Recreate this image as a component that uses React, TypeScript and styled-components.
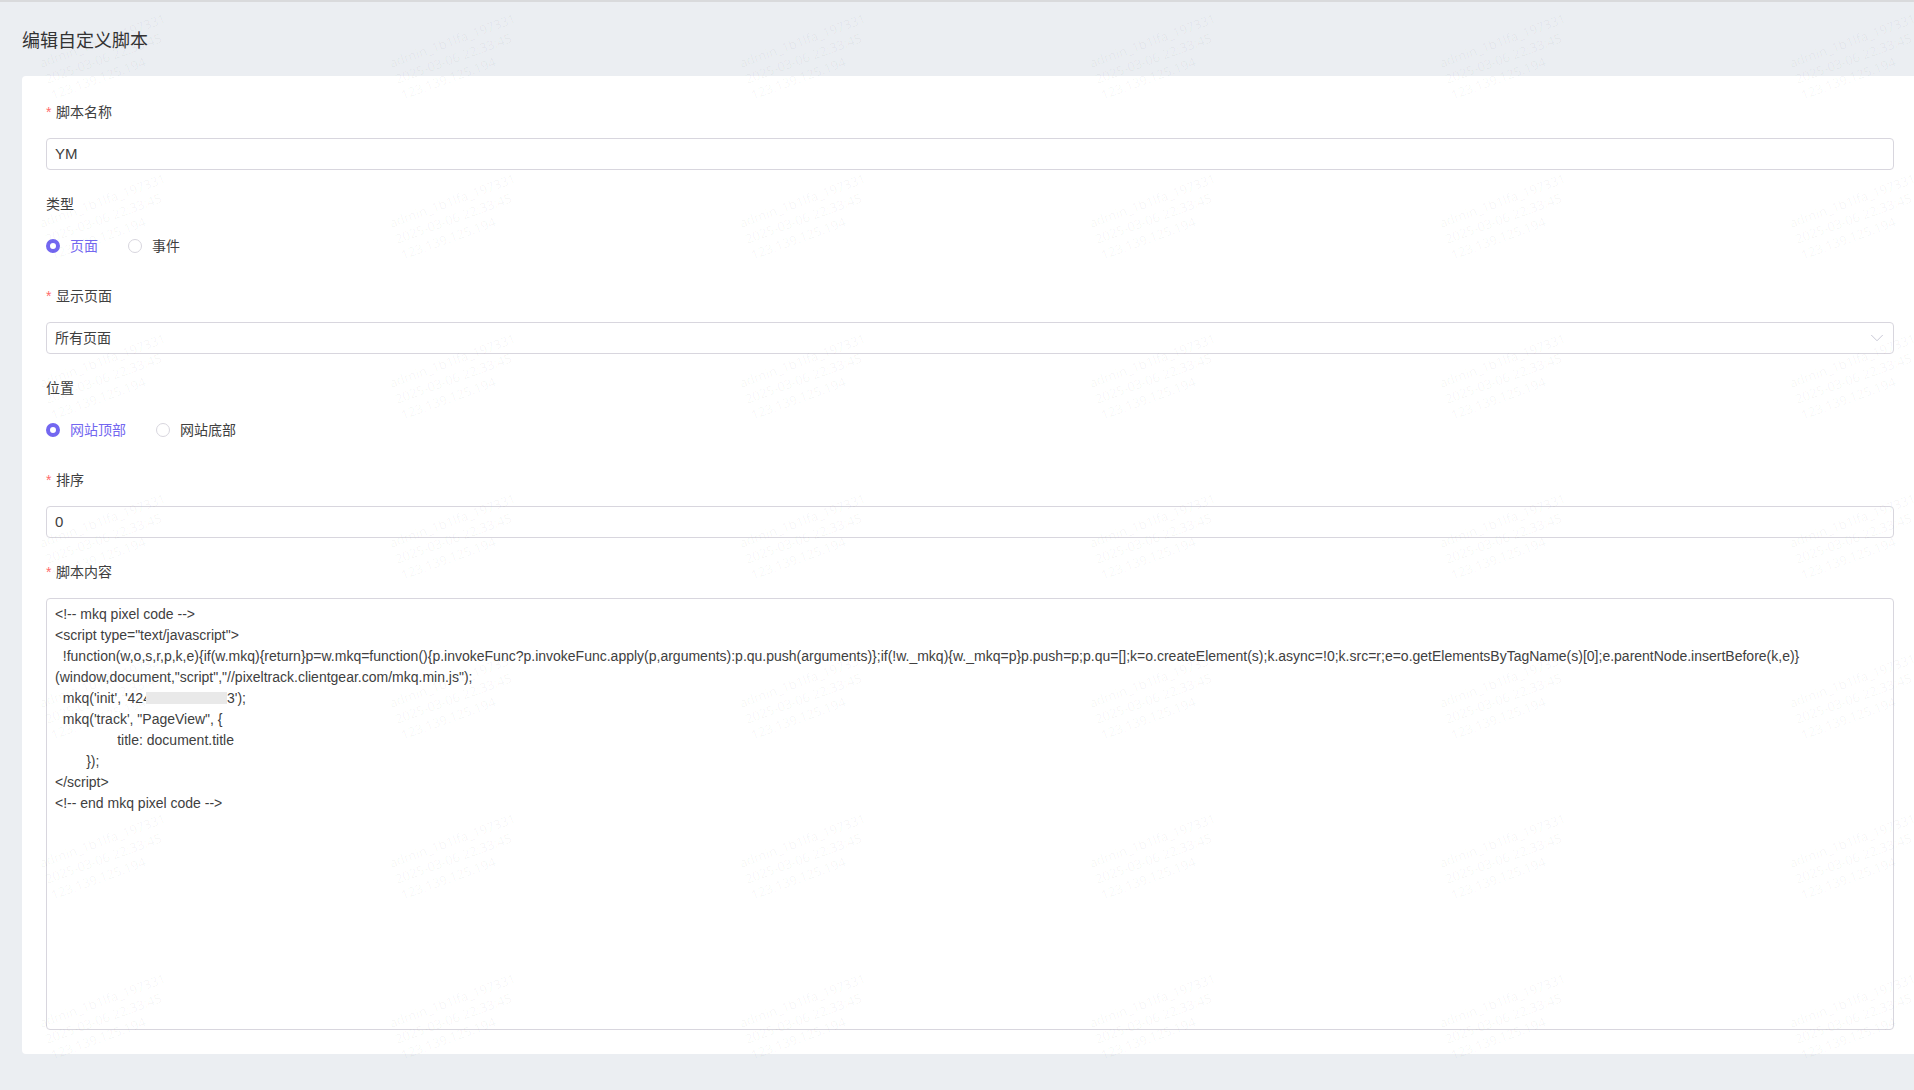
import React from "react";
import styled, { createGlobalStyle } from "styled-components";
import { ChevronDown } from "lucide-react";

const FONT = `"Liberation Sans", "Noto Sans CJK SC", sans-serif`;

const WATERMARK_COLS = 6;
const WATERMARK_ROWS = 7;

export default function App() {
  return (
    <Page>
      <GlobalStyle />
      <Title>编辑自定义脚本</Title>
      <Card>
        <Item>
          <Label $required>脚本名称</Label>
          <TextField>YM</TextField>
        </Item>
        <Item>
          <Label>类型</Label>
          <RadioGroup>
            <Radio $checked>页面</Radio>
            <Radio>事件</Radio>
          </RadioGroup>
        </Item>
        <Item>
          <Label $required>显示页面</Label>
          <SelectField>
            所有页面
            <SelectArrow>
              <ChevronDown size={22} strokeWidth={1} />
            </SelectArrow>
          </SelectField>
        </Item>
        <Item>
          <Label>位置</Label>
          <RadioGroup>
            <Radio $checked>网站顶部</Radio>
            <Radio>网站底部</Radio>
          </RadioGroup>
        </Item>
        <Item>
          <Label $required>排序</Label>
          <TextField>0</TextField>
        </Item>
        <Item>
          <Label $required>脚本内容</Label>
          <CodeArea>
            {`<!-- mkq pixel code -->
<script type="text/javascript">
  !function(w,o,s,r,p,k,e){if(w.mkq){return}p=w.mkq=function(){p.invokeFunc?p.invokeFunc.apply(p,arguments):p.qu.push(arguments)};if(!w._mkq){w._mkq=p}p.push=p;p.qu=[];k=o.createElement(s);k.async=!0;k.src=r;e=o.getElementsByTagName(s)[0];e.parentNode.insertBefore(k,e)}
(window,document,"script","//pixeltrack.clientgear.com/mkq.min.js");
  mkq('init', '424`}
            <Redacted />
            {`3');
  mkq('track', "PageView", {
                title: document.title
        });
</script>
<!-- end mkq pixel code -->`}
          </CodeArea>
        </Item>
      </Card>
      <WatermarkLayer>
        {Array.from({ length: WATERMARK_COLS * WATERMARK_ROWS }).map((_, i) => (
          <WatermarkCell key={i}>
            <WatermarkText>
              admin_1b1lfa_197331
              <br />
              2025-03-06 22:33:45
              <br />
              123.139.125.194
            </WatermarkText>
          </WatermarkCell>
        ))}
      </WatermarkLayer>
    </Page>
  );
}

const GlobalStyle = createGlobalStyle`
  html, body {
    margin: 0;
    padding: 0;
    background: #ebeef2;
  }
  *, *::before, *::after {
    box-sizing: border-box;
  }
`;

const Page = styled.div`
  position: relative;
  width: 1914px;
  height: 1090px;
  overflow: hidden;
  padding: 26px 0 36px 22px;
  background: #ebeef2;
  border-top: 2px solid #d9dadc;
  font-family: ${FONT};
  color: #333;
`;

const Title = styled.h1`
  margin: 0 0 22px;
  height: 26px;
  font-size: 18px;
  line-height: 26px;
  font-weight: 400;
  color: #333;
`;

const Card = styled.div`
  height: 978px;
  padding: 25px 20px 0 24px;
  background: #fff;
  border-radius: 4px 0 0 4px;
`;

const Item = styled.div`
  margin-bottom: 23px;
`;

const Label = styled.div<{ $required?: boolean }>`
  height: 22px;
  margin-bottom: 15px;
  font-size: 14px;
  line-height: 22px;
  color: #404040;

  ${({ $required }) =>
    $required &&
    `
    &::before {
      content: "*";
      display: inline-block;
      width: 10px;
      color: #ff6b6b;
      font-size: 14px;
    }
  `}
`;

const TextField = styled.div`
  height: 32px;
  padding: 0 8px;
  border: 1px solid #d8d6de;
  border-radius: 4px;
  background: #fff;
  font-size: 15px;
  line-height: 30px;
  color: #404040;
`;

const SelectField = styled(TextField)`
  position: relative;
  font-size: 14px;
`;

const SelectArrow = styled.span`
  position: absolute;
  top: 4px;
  right: 5px;
  display: flex;
  color: #c4c3d2;
`;

const RadioGroup = styled.div`
  display: flex;
  align-items: center;
  gap: 30px;
  height: 32px;
`;

const Radio = styled.span<{ $checked?: boolean }>`
  display: inline-flex;
  align-items: center;
  gap: 10px;
  font-size: 14px;
  line-height: 22px;
  color: ${({ $checked }) => ($checked ? "#7367f0" : "#404040")};

  &::before {
    content: "";
    width: 14px;
    height: 14px;
    border-radius: 50%;
    background: #fff;
    border: ${({ $checked }) =>
      $checked ? "4.5px solid #7367f0" : "1px solid #d8d6de"};
  }
`;

const CodeArea = styled.div`
  height: 432px;
  padding: 5px 8px;
  border: 1px solid #d8d6de;
  border-radius: 4px;
  background: #fff;
  font-family: "Liberation Sans", sans-serif;
  font-size: 14px;
  line-height: 21px;
  color: #404040;
  white-space: pre-wrap;
  word-break: break-word;
`;

const Redacted = styled.span`
  display: inline-block;
  width: 81px;
  height: 12px;
  margin-left: -5px;
  vertical-align: -1px;
  background: #e9e9e9;
`;

const WatermarkLayer = styled.div`
  position: absolute;
  top: -2px;
  left: 42px;
  display: grid;
  grid-template-columns: repeat(${WATERMARK_COLS}, 350px);
  grid-auto-rows: 160px;
  pointer-events: none;
`;

const WatermarkCell = styled.div`
  padding-top: 33px;
`;

const WatermarkText = styled.div`
  width: 124px;
  height: 51px;
  transform: rotate(-20deg);
  transform-origin: center;
  font-family: "Noto Sans", sans-serif;
  font-size: 13px;
  line-height: 17px;
  white-space: nowrap;
  color: rgba(0, 0, 0, 0.04);
`;
